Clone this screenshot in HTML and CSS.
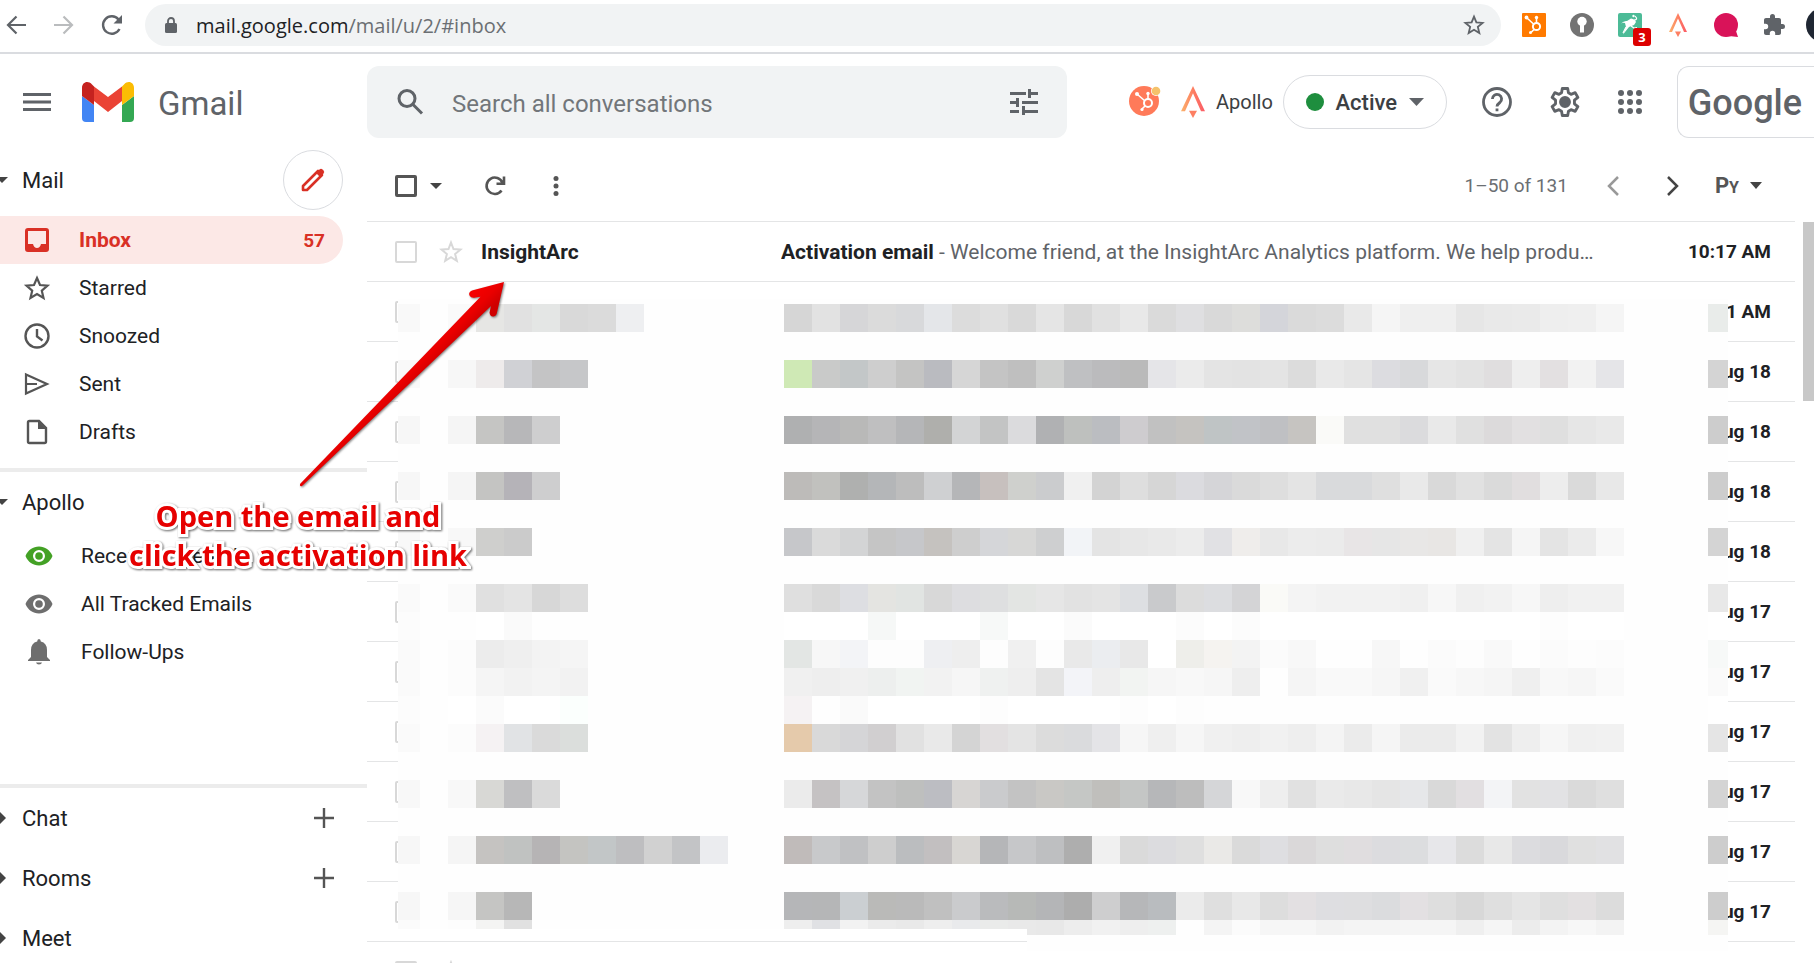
FILE: index.html
```html
<!DOCTYPE html>
<html lang="en">

<head>
    <meta charset="UTF-8">
    <meta name="viewport" content="width=device-width, initial-scale=1.0">
    <title>Gmail - Inbox</title>
    <link rel="stylesheet" href="styles.css">
</head>
<body>
    <!-- Browser bar -->
    <div class="browser">
        <button class="nav-btn" aria-label="Back"><svg width="22" height="22" viewBox="0 0 22 22" fill="none" stroke="#5f6368" stroke-width="2.2"><path d="M21 11H3M11.500 2.500L3 11l8.500 8.500"/></svg></button>
        <button class="nav-btn" aria-label="Forward"><svg width="22" height="22" viewBox="0 0 22 22" fill="none" stroke="#babcbe" stroke-width="2.200"><path d="M1 11h18M10.500 2.500L19 11l-8.500 8.500"/></svg></button>
        <button class="nav-btn" aria-label="Reload"><svg width="22" height="22" viewBox="0 0 22 22"><path d="M18.500 15A8.700 8.700 0 1 1 17.500 5.500" fill="none" stroke="#5f6368" stroke-width="2.400"/><path d="M21 1v8.500h-8.500z" fill="#5f6368"/></svg></button>
        <div class="address">
            <svg width="12" height="16" viewBox="0 0 12 16"><path d="M3 7V4a3 3 0 0 1 6 0v3" fill="none" stroke="#5f6368" stroke-width="1.800"/><rect y="6" width="12" height="10" rx="1.500" fill="#5f6368"/></svg>
            <span class="url">mail.google.com<span class="path">/mail/u/2/#inbox</span></span>
            <button class="icon-btn" aria-label="Bookmark"><svg width="22" height="22" viewBox="0 0 24 24" fill="none" stroke="#5f6368" stroke-width="2"><path d="M12 2.800l2.600 6.300 6.800.6-5.200 4.400 1.600 6.700L12 17.200l-5.800 3.600 1.600-6.700-5.200-4.400 6.800-.6z"/></svg></button>
        </div>
        <div class="extensions">
            <svg width="24" height="24" viewBox="0 0 24 24"><rect width="24" height="24" rx="1" fill="#ff7a00"/><g fill="none" stroke="#fff"><circle cx="14.500" cy="13.500" r="3.600" stroke-width="2"/><path d="M5 5l6.500 6M14.500 10V5M12 16.500L9 19.500" stroke-width="1.600"/></g><g fill="#fff"><circle cx="4.500" cy="4.500" r="1.900"/><circle cx="14.500" cy="4.500" r="1.700"/><circle cx="8.500" cy="19.500" r="1.500"/></g></svg>
            <svg width="24" height="24" viewBox="0 0 24 24"><circle cx="12" cy="12" r="12" fill="#737373"/><circle cx="12" cy="8.500" r="4.700" fill="#fff"/><path d="M10 11h4v8.500h-4z" fill="#fff"/></svg>
            <div class="ext-badged">
                <svg width="24" height="24" viewBox="0 0 24 24"><rect width="24" height="24" rx="2" fill="#4cbb97"/><path d="M3 10.500q3-3 6-2.500l4-2.500q4 .5 5 3.500-1 3-4.500 4l-2.500 1-6 7.500 3-7.500-1-4q-2-.5-4 .5z" fill="#fff"/><path d="M16 7q3 0 2.500-2L17 3M13 13l3 2 3-.5M8 14l-3 6" fill="none" stroke="#fff" stroke-width="1.200"/><circle cx="15.500" cy="3" r="1.200" fill="#fff"/></svg>
                <span class="badge">3</span>
            </div>
            <svg width="24" height="24" viewBox="0 0 24 24"><use href="#apollo"/></svg>
            <svg width="24" height="24" viewBox="0 0 24 24"><circle cx="12" cy="12" r="12" fill="#d91359"/><path d="M15 23l7-5 2 6z" fill="#d91359"/></svg>
            <svg width="24" height="24" viewBox="0 0 24 24"><path fill="#5f6368" d="M20.500 11H19V7c0-1.100-.9-2-2-2h-4V3.500a2.500 2.500 0 0 0-5 0V5H4c-1.100 0-2 .9-2 2v3.800h1.500a2.700 2.700 0 0 1 0 5.400H2V20c0 1.100.9 2 2 2h3.800v-1.500a2.700 2.700 0 0 1 5.400 0V22H17c1.100 0 2-.9 2-2v-4h1.500a2.500 2.500 0 0 0 0-5z"/></svg>
            <span class="avatar"></span>
        </div>
    </div>

    <!-- Gmail header -->
    <header class="header">
        <div class="brand">
            <button class="icon-btn" aria-label="Main menu"><svg width="28" height="18" viewBox="0 0 28 18" fill="#5f6368"><path d="M0 0h28v3H0zM0 7.500h28v3H0zM0 15h28v3H0z"/></svg></button>
            <svg class="logo" width="52" height="40" viewBox="0 0 52 40">
                <path d="M0 14l12 9v17H4a4 4 0 0 1-4-4z" fill="#4285f4"/>
                <path d="M52 14l-12 9v17h8a4 4 0 0 0 4-4z" fill="#34a853"/>
                <path d="M40 4.500l2-2C46-2 52 0 52 6v8l-12 9z" fill="#fbbc04"/>
                <path d="M12 4.500l14 10.500L40 4.500V19L26 30 12 19z" fill="#ea4335"/>
                <path d="M12 4.500l-2-2C6-2 0 0 0 6v8l12 9z" fill="#c5221f"/>
            </svg>
            <span class="brand-name">Gmail</span>
        </div>
        <form class="search">
            <button type="button" class="icon-btn" aria-label="Search"><svg width="28" height="28" viewBox="0 0 28 28" fill="none" stroke="#5f6368" stroke-width="3"><circle cx="11" cy="10.500" r="8"/><path d="M17 16.500l9 9"/></svg></button>
            <input type="text" placeholder="Search all conversations" aria-label="Search all conversations">
            <button type="button" class="icon-btn" aria-label="Search options"><svg width="28" height="26" viewBox="0 0 28 26" fill="#5f6368"><path d="M0 3h16v3H0zM18 0h3v3h7v3h-7v3h-3zM0 12h6V9h3v9H6v-3H0zM12 12h16v3H12zM0 21h9v3H0zM12 17h3v4h13v3H15v3h-3z"/></svg></button>
        </form>
        <div class="header-tools">
            <svg width="32" height="32" viewBox="0 0 32 32"><circle cx="15" cy="15" r="15" fill="#ff7a59"/><circle cx="27" cy="5" r="5" fill="#fff"/><circle cx="27" cy="5" r="4.300" fill="#f5c26b"/><g fill="none" stroke="#fff"><circle cx="19" cy="17" r="4" stroke-width="2"/><path d="M8 8l8 7M19 13V7M16 20l-3 3" stroke-width="1.600"/></g><g fill="#fff"><circle cx="8" cy="8" r="2"/><circle cx="19" cy="7.500" r="1.700"/><circle cx="13" cy="23.500" r="1.600"/></g></svg>
            <a class="apollo-link" href="#"><svg width="32" height="32" viewBox="0 0 24 24"><use href="#apollo"/></svg>Apollo</a>
            <button class="status"><span class="dot"></span>Active<svg width="15" height="8" viewBox="0 0 15 8"><path d="M0 0h15L7.500 8z" fill="#5f6368"/></svg></button>
            <button class="icon-btn" aria-label="Support"><svg width="30" height="30" viewBox="0 0 30 30" fill="none" stroke="#5f6368" stroke-width="2.800"><circle cx="15" cy="15" r="13.500"/><path d="M10.400 12a4.600 4.600 0 1 1 7.500 3.500c-1.900 1.400-2.900 2-2.900 4M15 21.500v2.800"/></svg></button>
            <button class="icon-btn" aria-label="Settings"><svg width="36" height="36" viewBox="0 0 24 24" fill="none" stroke="#5f6368" stroke-width="1.900" stroke-linejoin="round"><path d="M10.200 3h3.600l.5 2.900 1.700 1 2.800-1.100 1.800 3.100-2.300 1.900v2.400l2.300 1.900-1.800 3.100-2.800-1.100-1.700 1-.5 2.900h-3.600l-.5-2.900-1.700-1-2.800 1.100-1.800-3.100 2.300-1.900v-2.400L3.400 8.900l1.800-3.100L8 6.900l1.700-1z"/><circle cx="12" cy="12" r="3" fill="#5f6368"/></svg></button>
            <button class="icon-btn" aria-label="Google apps"><svg width="24" height="24" viewBox="0 0 24 24" fill="#5f6368"><circle cx="3" cy="3" r="3"/><circle cx="12" cy="3" r="3"/><circle cx="21" cy="3" r="3"/><circle cx="3" cy="12" r="3"/><circle cx="12" cy="12" r="3"/><circle cx="21" cy="12" r="3"/><circle cx="3" cy="21" r="3"/><circle cx="12" cy="21" r="3"/><circle cx="21" cy="21" r="3"/></svg></button>
            <a class="account" href="#">Google</a>
        </div>
    </header>

    <div class="page">
        <!-- Sidebar -->
        <nav class="sidebar">
            <div class="section-head">
                <svg width="22" height="16" viewBox="0 0 22 16"><path d="M-4 5H8L2 11z" fill="#444"/></svg>
                <span>Mail</span>
                <button class="compose" aria-label="Compose"><svg width="26" height="26" viewBox="0 0 26 26"><path d="M3 23v-4L18 4l4 4L7 23z" fill="none" stroke="#d93025" stroke-width="2.600" stroke-linejoin="round"/><path d="M16 6l3.500-3.500q1.500-1.500 3 0l1 1q1.500 1.500 0 3L20 10z" fill="#d93025"/></svg></button>
            </div>
            <ul class="folders">
                <li><a class="active" href="#"><svg width="28" height="28" viewBox="0 0 28 28"><path fill="#d93025" fill-rule="evenodd" d="M5 2h18a3 3 0 0 1 3 3v18a3 3 0 0 1-3 3H5a3 3 0 0 1-3-3V5a3 3 0 0 1 3-3zm0 3v13h5q1 4 4 4t4-4h5V5z"/></svg>Inbox<span class="count">57</span></a></li>
                <li><a href="#"><svg width="28" height="28" viewBox="0 0 28 28" fill="none" stroke="#555" stroke-width="2.200"><path d="M14 4l3 7 7.500.7-5.700 5 1.700 7.300-6.500-4-6.500 4 1.700-7.300-5.700-5L11 11z"/></svg>Starred</a></li>
                <li><a href="#"><svg width="28" height="28" viewBox="0 0 28 28" fill="none" stroke="#555" stroke-width="2.400"><circle cx="14" cy="14" r="11.500"/><path d="M14 7v7.500l5.500 4"/></svg>Snoozed</a></li>
                <li><a href="#"><svg width="28" height="28" viewBox="0 0 28 28" fill="none" stroke="#555" stroke-width="2.200"><path d="M3 4.500L24 14 3 23.500V4.500zM3 14h11"/></svg>Sent</a></li>
                <li><a href="#"><svg width="28" height="28" viewBox="0 0 28 28"><path d="M5 4.500Q5 3 6.500 3H16l7 7v13.500q0 1.500-1.500 1.500h-15Q5 25 5 23.500z" fill="none" stroke="#555" stroke-width="2.400"/><path d="M15 3l8 8h-8z" fill="#555"/></svg>Drafts</a></li>
            </ul>
            <div class="section-head divided">
                <svg width="22" height="16" viewBox="0 0 22 16"><path d="M-4 5H8L2 11z" fill="#444"/></svg>
                <span>Apollo</span>
            </div>
            <ul class="folders tracked">
                <li><a href="#"><svg width="28" height="28" viewBox="0 0 28 28"><path fill="#43a125" fill-rule="evenodd" d="M14 4.500c6 0 11 3.500 13.500 9.500-2.500 6-7.500 9.500-13.500 9.500S3 20 .5 14C3 8 8 4.500 14 4.500zM14 8a6 6 0 1 0 0 12 6 6 0 0 0 0-12z"/><circle cx="14" cy="14" r="3.800" fill="#43a125"/></svg>Recently Opened</a></li>
                <li><a href="#"><svg width="28" height="28" viewBox="0 0 28 28"><path fill="#6e6e6e" fill-rule="evenodd" d="M14 4.500c6 0 11 3.500 13.500 9.500-2.500 6-7.500 9.500-13.500 9.500S3 20 .5 14C3 8 8 4.500 14 4.500zM14 8a6 6 0 1 0 0 12 6 6 0 0 0 0-12z"/><circle cx="14" cy="14" r="3.800" fill="#6e6e6e"/></svg>All Tracked Emails</a></li>
                <li><a href="#"><svg width="28" height="28" viewBox="0 0 28 28"><path fill="#6e6e6e" d="M14 1q1.800 0 1.800 2.500 6.200 1.500 6.200 8.500v7l3 3v1H3v-1l3-3v-7q0-7 6.200-8.500Q12.200 1 14 1zM11 24.500h6q-.5 2-3 2t-3-2z"/></svg>Follow-Ups</a></li>
            </ul>
            <div class="section-head divided">
                <svg width="22" height="16" viewBox="0 0 22 16"><path d="M0 2l6 6-6 6z" fill="#444"/></svg>
                <span>Chat</span>
                <button class="add" aria-label="Start a chat"><svg width="20" height="20" viewBox="0 0 20 20"><path d="M10 0v20M0 10h20" stroke="#555" stroke-width="2.400"/></svg></button>
            </div>
            <div class="section-head">
                <svg width="22" height="16" viewBox="0 0 22 16"><path d="M0 2l6 6-6 6z" fill="#444"/></svg>
                <span>Rooms</span>
                <button class="add" aria-label="Create a room"><svg width="20" height="20" viewBox="0 0 20 20"><path d="M10 0v20M0 10h20" stroke="#555" stroke-width="2.400"/></svg></button>
            </div>
            <div class="section-head">
                <svg width="22" height="16" viewBox="0 0 22 16"><path d="M0 2l6 6-6 6z" fill="#444"/></svg>
                <span>Meet</span>
            </div>
        </nav>

        <!-- Message list -->
        <main class="main">
            <div class="toolbar">
                <input type="checkbox" class="check dark" aria-label="Select all">
                <button class="icon-btn" aria-label="Select menu"><svg width="12" height="6" viewBox="0 0 12 6"><path d="M0 0h12L6 6z" fill="#444"/></svg></button>
                <button class="icon-btn refresh" aria-label="Refresh"><svg width="22" height="22" viewBox="0 0 22 22" fill="none" stroke="#555" stroke-width="2.600"><path d="M17.500 15.500A8.200 8.200 0 1 1 18.500 8M20 1.500v7.200h-7.500"/></svg></button>
                <button class="icon-btn more" aria-label="More"><svg width="6" height="20" viewBox="0 0 6 20" fill="#555"><circle cx="3" cy="2.500" r="2.500"/><circle cx="3" cy="10" r="2.500"/><circle cx="3" cy="17.500" r="2.500"/></svg></button>
                <span class="range">1–50 of 131</span>
                <button class="icon-btn prev" aria-label="Newer"><svg width="12" height="20" viewBox="0 0 12 20" fill="none" stroke="#999" stroke-width="2.500"><path d="M11 1l-9 9 9 9"/></svg></button>
                <button class="icon-btn next" aria-label="Older"><svg width="12" height="20" viewBox="0 0 12 20" fill="none" stroke="#444" stroke-width="2.500"><path d="M1 1l9 9-9 9"/></svg></button>
                <button class="input-tool">P<small>Y</small><svg width="12" height="7" viewBox="0 0 12 7"><path d="M0 0h12L6 7z" fill="#444"/></svg></button>
            </div>
            <div class="list">
                <table class="mails">
                    <colgroup><col class="c-check"><col class="c-star"><col class="c-from"><col><col class="c-date"></colgroup>
                    <tbody id="mails">
                        <tr>
                            <td><input type="checkbox" class="check" aria-label="Select message"></td>
                            <td><button class="icon-btn" aria-label="Star"><svg width="24" height="24" viewBox="0 0 24 24" fill="none" stroke="#d8d8d8" stroke-width="2"><path d="M12 2.500l2.500 6.500 7 .5-5.400 4.500 1.700 6.800-5.800-3.700-5.800 3.700 1.700-6.800L2.500 9.500l7-.5z"/></svg></button></td>
                            <td class="from">InsightArc</td>
                            <td class="subject"><b>Activation email</b> - Welcome friend, at the InsightArc Analytics platform. We help produ…</td>
                            <td class="date">10:17 AM</td>
                        </tr>
                    </tbody>
                </table>
                <div class="scrollbar"></div>
                <svg class="mosaic" id="mosaic" width="1330" height="652" viewBox="0 0 1330 652" shape-rendering="crispEdges" aria-hidden="true"></svg>
            </div>
        </main>
    </div>

    <!-- Callout -->
    <svg class="arrow" width="220" height="220" viewBox="0 0 220 220" aria-hidden="true">
        <defs>
            <linearGradient id="red" gradientUnits="userSpaceOnUse" x1="172" y1="24" x2="188" y2="40"><stop offset="0" stop-color="#f40000"/><stop offset=".5" stop-color="#ea0000"/><stop offset="1" stop-color="#cf0000"/></linearGradient>
        </defs>
        <path fill="url(#red)" d="M208 6l-32 8.500q-4 2-2.500 5 1.500 3 6 2l5-.7L4 208q-.5 3 2 2L195 30l-1.500 6.500q.5 4.500 4 4 3-.5 3.500-4z"/>
    </svg>
    <p class="callout">Open the email and<br>click the activation link</p>

    <svg width="0" height="0" class="defs" aria-hidden="true">
        <defs>
            <linearGradient id="flame"><stop offset="0" stop-color="#fbb36b"/><stop offset=".5" stop-color="#fd7f62"/><stop offset="1" stop-color="#fb5a66"/></linearGradient>
            <g id="apollo"><path d="M12 0l9 19h-3L12 5.500 6 19H3z" fill="url(#flame)"/><path d="M9 18.500h6L12 24z" fill="#fd7f62"/></g>
        </defs>
    </svg>
    <script src="script.js"></script>
</body>

</html>
```
FILE: styles.css
```css
* {
    box-sizing: border-box;
}

body {
    margin: 0;
    height: 100vh;
    overflow: hidden;
    display: flex;
    flex-direction: column;
    position: relative;
    background: #fff;
    color: #202124;
    font-family: Roboto, sans-serif;
    font-size: 21px;
}

button {
    padding: 0;
    border: 0;
    background: none;
    font: inherit;
    color: inherit;
    cursor: pointer;
}

svg {
    display: block;
    flex: none;
}

a {
    color: inherit;
    text-decoration: none;
}

.icon-btn {
    display: flex;
    align-items: center;
    justify-content: center;
}

.defs {
    position: absolute;
}

/* Browser bar */
.browser {
    flex: none;
    display: flex;
    align-items: center;
    height: 54px;
    padding: 0 0 2px 5px;
    border-bottom: 2px solid #dadce0;
    overflow: hidden;
}

.nav-btn {
    flex: none;
    width: 48px;
}

.address {
    flex: 1;
    display: flex;
    align-items: center;
    height: 42px;
    padding: 0 16px 0 20px;
    margin-right: 21px;
    margin-left: -4px;
    border-radius: 21px;
    background: #f1f3f4;
}

.url {
    flex: 1;
    margin-left: 19px;
    font-family: "Open Sans", sans-serif;
    font-size: 20px;
}

.path {
    color: #6b6f73;
}

.extensions {
    display: flex;
    align-items: center;
    gap: 24px;
    width: 292px;
}

.ext-badged {
    position: relative;
}

.badge {
    position: absolute;
    left: 15px;
    top: 15px;
    width: 18px;
    height: 18px;
    border-radius: 3px;
    background: #d00;
    color: #fff;
    font: bold 13px/18px "Open Sans", sans-serif;
    text-align: center;
}

.avatar {
    flex: none;
    width: 34px;
    height: 34px;
    margin-left: -4px;
    border-radius: 50%;
    background: #202733;
}

/* Header */
.header {
    flex: none;
    display: flex;
    align-items: center;
    height: 96px;
    overflow: hidden;
}

.brand {
    flex: none;
    display: flex;
    align-items: center;
    width: 367px;
    padding-left: 23px;
}

.logo {
    margin-left: 31px;
}

.brand-name {
    margin-left: 24px;
    padding-top: 2px;
    color: #5f6368;
    font-size: 33px;
}

.search {
    flex: 0 1 700px;
    display: flex;
    align-items: center;
    height: 72px;
    padding: 0 29px;
    border-radius: 12px;
    background: #f1f3f4;
}

.search input {
    flex: 1;
    min-width: 0;
    padding: 3px 28px 0;
    border: 0;
    outline: 0;
    background: none;
    font: 24px Roboto, sans-serif;
}

.search input::placeholder {
    color: #72767a;
}

.header-tools {
    flex: 1;
    display: flex;
    align-items: center;
    padding-left: 62px;
    gap: 35px;
}

.apollo-link {
    display: flex;
    align-items: center;
    gap: 7px;
    margin: 0 -25px 0 -19px;
    color: #3c4043;
    font-size: 20px;
}

.status {
    display: flex;
    align-items: center;
    justify-content: center;
    gap: 12px;
    width: 164px;
    height: 54px;
    border: 1px solid #dadce0;
    border-radius: 27px;
    color: #3c4043;
    font-size: 22px;
    font-weight: 500;
}

.dot {
    width: 18px;
    height: 18px;
    border-radius: 50%;
    background: #1e8e3e;
}

.account {
    flex: 1;
    height: 72px;
    padding-left: 10px;
    border: 1px solid #dadce0;
    border-right: 0;
    border-radius: 12px 0 0 12px;
    color: #5f6368;
    font: 500 36px/72px Roboto, sans-serif;
}

/* Page */
.page {
    flex: 1;
    display: flex;
    min-height: 0;
}

.sidebar {
    flex: none;
    width: 367px;
    overflow: hidden;
}

.section-head {
    display: flex;
    align-items: center;
    height: 60px;
    font-size: 22px;
}

.section-head.divided {
    height: 64px;
    border-top: 4px solid #ececec;
}

.compose {
    display: flex;
    align-items: center;
    justify-content: center;
    width: 60px;
    height: 60px;
    margin-left: auto;
    margin-right: 24px;
    border: 1px solid #dadce0;
    border-radius: 50%;
}

.add {
    margin-left: auto;
    margin-right: 33px;
}

.folders {
    list-style: none;
    margin: 6px 24px 12px 0;
    padding: 0;
}

.folders a {
    display: flex;
    align-items: center;
    gap: 28px;
    height: 48px;
    padding: 0 18px 0 23px;
    border-radius: 0 24px 24px 0;
}

.folders .active {
    background: #fce8e6;
    color: #d93025;
    font-weight: 700;
}

.count {
    margin-left: auto;
    font-size: 19px;
}

.tracked {
    margin: 0 24px 108px 0;
}

.tracked a {
    padding-left: 25px;
}

/* Message list */
.main {
    flex: 1;
    min-width: 0;
}

.toolbar {
    display: flex;
    align-items: center;
    height: 72px;
    margin-right: 19px;
    padding-left: 28px;
    border-bottom: 1px solid #e4e5e6;
}

.check {
    appearance: none;
    display: block;
    width: 22px;
    height: 22px;
    margin: 0;
    border: 2px solid #d8d8d8;
    border-radius: 2px;
}

.check.dark {
    margin-right: 13px;
    border: 3px solid #555;
}

.refresh {
    margin-left: 42px;
}

.more {
    margin-left: 47px;
}

.range {
    margin-left: auto;
    color: #6b6f73;
    font-size: 19px;
}

.prev {
    margin-left: 39px;
}

.next {
    margin-left: 48px;
}

.input-tool {
    display: flex;
    align-items: baseline;
    margin-left: 36px;
    margin-right: 33px;
    color: #555;
    font-size: 22px;
    font-weight: 700;
}

.input-tool small {
    font-size: 16px;
}

.input-tool svg {
    align-self: center;
    margin-left: 11px;
}

.list {
    position: relative;
    display: flex;
}

.mails {
    flex: 1;
    width: 100%;
    table-layout: fixed;
    border-spacing: 0;
}

.mails td {
    height: 60px;
    padding: 0;
    border-bottom: 1px solid #e4e5e6;
    white-space: nowrap;
    overflow: hidden;
}

.mails td:first-child {
    padding-left: 28px;
}

.c-check {
    width: 72px;
}

.c-star {
    width: 42px;
}

.c-from {
    width: 300px;
}

.c-date {
    width: 176px;
}

.mails .from {
    font-weight: 700;
}

.mails .subject {
    color: #5f6368;
    text-overflow: ellipsis;
}

.subject b {
    color: #202124;
}

.mails .date {
    padding-right: 24px;
    font-size: 19px;
    font-weight: 700;
    text-align: right;
}

.scrollbar {
    flex: none;
    width: 11px;
    height: 179px;
    margin-left: 8px;
    background: #c8c8c8;
}

/* Hidden rows, drawn over the list */
.mosaic {
    position: absolute;
    left: 31px;
    top: 77px;
}

/* Callout */
.arrow {
    position: absolute;
    left: 296px;
    top: 276px;
    filter: drop-shadow(1px 1px 1px rgba(0, 0, 0, 0.5));
}

.callout {
    position: absolute;
    left: 98px;
    top: 496px;
    width: 400px;
    margin: 0;
    color: #e60000;
    font: bold 29px/39px "Open Sans", sans-serif;
    text-align: center;
    -webkit-text-stroke: 6px #fff;
    paint-order: stroke fill;
    filter: drop-shadow(1px 1px 1px rgba(0, 0, 0, 0.6));
}
```
FILE: script.js
```js
const dates = ['10:11 AM', 'Aug 18', 'Aug 18', 'Aug 18', 'Aug 18', 'Aug 17', 'Aug 17', 'Aug 17', 'Aug 17', 'Aug 17', 'Aug 17', ''];
const tbody = document.getElementById('mails');
const first = tbody.rows[0];

dates.forEach(date => {
    const row = first.cloneNode(true);
    row.cells[2].textContent = '';
    row.cells[3].textContent = '';
    row.cells[4].textContent = date;
    tbody.appendChild(row);
});

// y, height, first two columns, sender cells, subject cells, date cell
// two digits stand for a grey
const rows = [
    [5, 28, 'f9 fa', 'e6e6e4 e1 e4e6e5 d9 db eeeff1', 'd6 e2 d6d6d8 db d8d9db e4e6e9 dc e0 d9 e5 d8 e1 e8 da dfdfe1 d9 dddddb d4d5da da dc e9 f5 ef ef e6 e9 ea ee ef f5', 'e9ecea'],
    [61, 28, 'f9 f7', 'eeebeb d0d1d5 c4c4c5 c6c7c9', 'cfe9b5 c9cac9 c3c7c8 ce c4c4c3 babbc0 d6 c4 bf cfd0cf bfc0c2 bbbbbd ba e5e5e8 eb e4 e3 e4 dc e9 e5 dcdce0 d8d9db e6 e3 e0dedf ee e3e0e1 f2 e5e5e8', 'd4'],
    [117, 28, 'f7 f5', 'c5c5c3 b7b7b9 cececf', 'afb0b1 b5b5b7 b9b9b8 bfbfc0 b5b6b8 afafac d3d4d5 c3c4c4 dbdbdd b0b1b3 bec0be bbbdc1 cecccf c1 c5c3c0 bfc4c5 c1c3c7 bfc0c3 c6c4c1 fafaf8 e0 e0 dbdbdd e9 e0 dcdadb e2e0e1 df e6 e9', 'cd'],
    [173, 28, 'f7 f5', 'c4c4c2 b5b3b8 cececf', 'bdbbb9 c1c1be afb0af b4b6b8 bd cfd0d2 b5b6b8 c7c0be cfd0cd cbccce f0 d3 de d6 dbdbdf d5d5d8 da de e4 d9dadc d9dadc df e9 d9 e1 da e1dedf ed da e8', 'cd'],
    [229, 28, 'f8 f8', 'cfcfcd cb', 'c6c7ca da d3d4d5 c5 c6c7ca c5c2bf ce d5d6d9 d7d7d6 cecfd0 f2f4f7 e4 e7 e9 ec e1e1e4 efedeb e8 ec eb e8e5e6 e6 e8e7e6 e8e6e4 f0 e4 f5 e4 eb f7', 'd4'],
    [285, 28, 'fa fa', 'e0 e4 d7 dd', 'df d9 dddee2 e4e4e1 e1e4e2 d8 dddde0 dedfe0 e3e5e3 e6 e2 e4 dddfe2 c9cacc dc dcdde0 d4d4d6 fafaf7 f4 f2 f2 f2 f0 f7 f0 f2 f7 ee f1 f1', 'e8'],
    [313, 28, 'fc fe', 'ff fa', 'ff ff ff f6f8f7 ff ff ff f7f9f8 ff ff fb ff ff ff fc ff fc ff ff ff ff ff ff ff ff ff ff fd ff ff', 'ff'],
    [341, 28, 'fa fc', 'ec ef f3 f5', 'e3e6e4 f7 f3f4f7 fd fd eeeff2 ee fd f0 fd e9 ebedf0 e8 ff eeeeea f5f3f0 f3 fb f8 fe fe f7 fe fb fd f9 fe fb fd fc', 'f7f9f8'],
    [369, 28, 'fa fc', 'f5 f2 f4 f2', 'f0 ee f0 edefee f1f4f2 f2 f6 eff1f0 ee e4 f3f4f8 ee f2f4f2 f6 f8 f6 ee fe f5 f9 f9 f6 f0 fa f7 f5 ef f8 f6 fa', 'fa'],
    [397, 28, 'fc ff', 'fb ff ff fbfffd', 'f5f2f3 fe fa ff ff ff ff fd ff ff ff ff fd ff fd', 'ff'],
    [425, 28, 'fa fc', 'f5f2f3 e1e3e5 da dbdedc', 'e5caab d9 d5d5d7 d1cfd0 e1 e9 d4 e2dfe0 e4 dc dadbdd e4e4e7 f6 ef f6 f0 ee f1 ee f4 eb f5 eb eb f2 e3 ee f6 f0 f1', 'e5'],
    [481, 28, 'f8 f8', 'd8d8d5 bfbfc1 da', 'eb c5c2c3 d6d7d9 c3 bebfbe bcbdc2 d7d5d3 cacbcd c3 c9c8c5 c5c7c5 c0bfbc c4c6c5 b6b7b9 bd d5d6d8 f8 ee e1 ea e8 e5 e6e7e9 d9 e2dfe1 f3f4f6 e2 e2e2e4 da df', 'd4'],
    [537, 28, 'f7 f5', 'c5c3c1 c0c2c1 b6b4b5 c4c4c1 c2c6c7 bebec0 d1 c3c4c6 ebecef', 'c0bbba c8c9cb c0c1c3 ce bbbdbf c2bfc0 d8d6d3 b5b6b8 c6c7c9 bebfc1 ae f0 da dcdcdf df eae9e7 da dedee1 dad8d9 de e0dddf dcdcdf dcdddf e7e7ea dc e8 dcdcdf d9d9dc e0 e1e1e3', 'cd'],
    [593, 28, 'f7 f6', 'c5c5c3 b7', 'b5b6b8 b5b6b7 cbcfd2 babab8 ba c0 cacbcd babbbd b7b9b7 b4b5b7 ad cececf b6b7b9 b9bcbf eb df e8 dd e3e0e2 dedee1 dedee0 dbdcde e3e0e2 de d8 df e5 df e3e0e1 dc', 'cd'],
    [621, 15, 'fb fd', 'f4f4f3 e1', 'ee e0e1e4 f2 eb e9 ee e9eaec eaebea e9 e8 ed f1 ee eef0ef fe f4 fb f6 f6 f2 f4 f4 f5 f5 ef f5 ec f3 f7 f3', 'f5f5f3']
];

const mosaic = document.getElementById('mosaic');

function cell(x, y, width, height, color) {
    const rect = document.createElementNS('http://www.w3.org/2000/svg', 'rect');
    rect.setAttribute('x', x);
    rect.setAttribute('y', y);
    rect.setAttribute('width', width);
    rect.setAttribute('height', height);
    rect.setAttribute('fill', '#' + (color.length === 2 ? color.repeat(3) : color));
    mosaic.appendChild(rect);
}

cell(0, 0, 1330, 630, 'fe');
cell(629, 630, 701, 22, 'fe');

rows.forEach(([y, height, lead, from, subject, date]) => {
    const [edge, star] = lead.split(' ');
    cell(0, y, 22, height, edge);
    cell(50, y, 28, height, star);
    from.split(' ').forEach((color, i) => cell(78 + i * 28, y, 28, height, color));
    subject.split(' ').forEach((color, i) => cell(386 + i * 28, y, 28, height, color));
    cell(1310, y, 20, height, date);
});

// the left part ends a little higher
cell(0, 630, 629, 8, 'ff');
```
